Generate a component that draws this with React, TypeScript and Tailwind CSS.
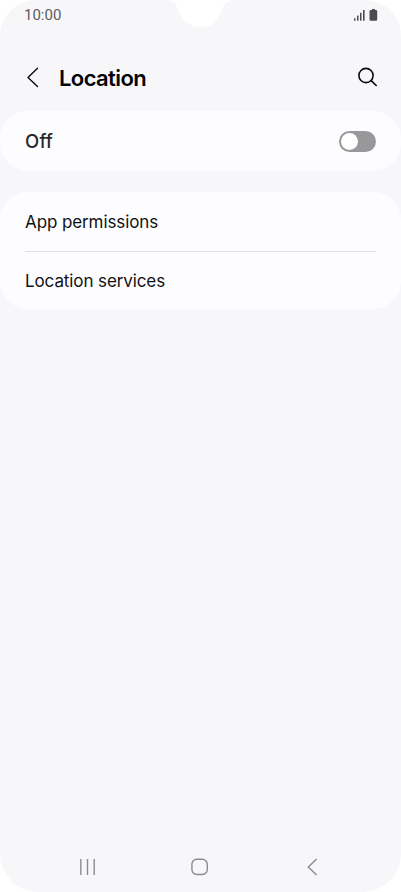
import type { ReactNode } from "react";

function StatusBar() {
  return (
    <div className="flex h-[30px] items-start justify-between pl-6 pr-[23px]">
      <span className="mt-[5px] font-['Roboto',sans-serif] text-[15px] leading-5 text-[#5c5c5e]">
        10:00
      </span>
      <svg className="mt-[9px]" width="25" height="13" viewBox="0 0 25 13" fill="#4b4b4d">
        <rect x="1" y="9.3" width="1.5" height="2.4" />
        <rect x="4" y="6.6" width="1.5" height="5.1" />
        <rect x="7" y="3.8" width="1.5" height="7.9" />
        <rect x="10" y="1" width="1.6" height="10.7" />
        <path d="M19 .1h3v1h.8a1.4 1.4 0 0 1 1.4 1.4v7.9a1.4 1.4 0 0 1-1.4 1.4h-4.9a1.4 1.4 0 0 1-1.4-1.4V2.5a1.4 1.4 0 0 1 1.4-1.4h1.1z" />
      </svg>
    </div>
  );
}

function Header() {
  return (
    <header className="flex h-[81px] items-start pl-[26px] pr-[23px] pt-[35px]">
      <button aria-label="Back" className="h-6 w-[14px]">
        <svg width="14" height="24" viewBox="0 0 14 24" fill="none" stroke="#0a0a0c" strokeWidth="1.4" strokeLinecap="round" strokeLinejoin="round">
          <path d="M11.5 3.3 2 12.4l9.5 9.1" />
        </svg>
      </button>
      <h1 className="ml-[18px] mt-px flex-1 pl-px text-[22px] font-semibold leading-6 tracking-[-0.6px] text-[#050507]">
        Location
      </h1>
      <button aria-label="Search" className="mt-[2px] h-5 w-5">
        <svg width="20" height="20" viewBox="0 0 20 20" fill="none" stroke="#0a0a0c" strokeWidth="1.6" strokeLinecap="round">
          <circle cx="8" cy="8.5" r="7.1" />
          <path d="m13.2 13.6 5 4.9" />
        </svg>
      </button>
    </header>
  );
}

function Row({ children }: { children: ReactNode }) {
  return (
    <div className="flex h-[58px] shrink-0 items-center text-[17px] leading-6 tracking-[-0.1px] text-[#111113]">
      {children}
    </div>
  );
}

function NavBar() {
  return (
    <nav className="mt-auto flex h-[50px] items-center pl-[78px] text-[#8c8c90]">
      <svg width="18" height="18" viewBox="0 0 18 18" stroke="currentColor" strokeWidth="1.4">
        <path d="M2.8 1v16M9.5 1v16M16.2 1v16" />
      </svg>
      <svg className="ml-[94px]" width="18" height="18" viewBox="0 0 18 18" fill="none" stroke="currentColor" strokeWidth="1.4">
        <rect x="1.9" y="1.3" width="15.4" height="15.2" rx="5" />
      </svg>
      <svg className="ml-[96px]" width="18" height="18" viewBox="0 0 18 18" fill="none" stroke="currentColor" strokeWidth="1.4">
        <path d="M12.6 1 4.3 9l8.3 8" />
      </svg>
    </nav>
  );
}

export default function App() {
  return (
    <div className="h-[892px] w-[401px] bg-white font-['Inter',sans-serif]">
      <main className="relative flex h-full flex-col overflow-hidden rounded-t-[36px] rounded-b-[38px] bg-[#f7f7f9]">
        {/* Camera notch */}
        <svg className="absolute left-[168px] top-0" width="66" height="28" viewBox="0 0 66 28" fill="#ffffff">
          <path d="M0 0C5 .5 8 4 10 9.5C13 20 22 27.3 33 27.3S51 20 54 9.5C56 4 60 .5 66 0z" />
        </svg>
        <StatusBar />
        <Header />

        <section className="flex h-[60px] items-center justify-between rounded-[28px] bg-[#fdfdff] px-[25px]">
          <span className="text-[18.5px] font-medium leading-6 tracking-[0.2px] text-[#28282a]">Off</span>
          <button role="switch" aria-checked="false" aria-label="Location" className="flex h-[21px] w-[37px] items-center rounded-full bg-[#98989b] p-[2px]">
            <span className="h-[17px] w-[17px] rounded-full bg-white" />
          </button>
        </section>

        <section className="mt-[21px] flex h-[117px] flex-col rounded-[28px] bg-[#fdfdff] px-[25px] pt-px">
          <Row>App permissions</Row>
          <div className="h-px shrink-0 bg-[#dfdfe1]" />
          <Row>Location services</Row>
        </section>

        <NavBar />
      </main>
    </div>
  );
}
